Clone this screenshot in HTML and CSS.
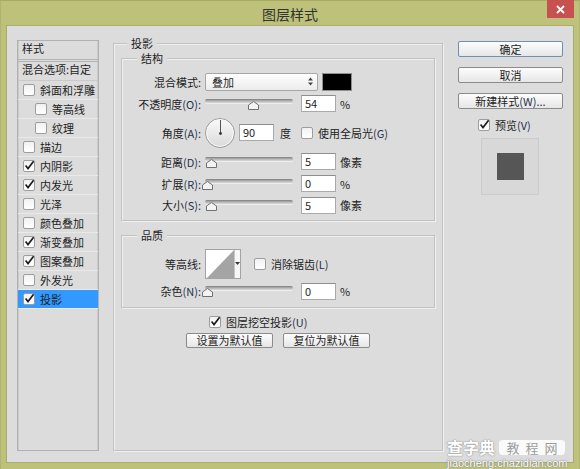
FILE: index.html
```html
<!DOCTYPE html>
<html lang="zh">
<head>
<meta charset="utf-8">
<title>图层样式</title>
<link rel="stylesheet" href="styles.css">
</head>
<body>
<div class="window">
  <div class="titlebar">
    <div class="title">图层样式</div>
    <div class="close"><svg width="9" height="9" viewBox="0 0 9 9"><path d="M1 1 L8 8 M8 1 L1 8" stroke="#fff" stroke-width="1.8" fill="none"/></svg></div>
  </div>
  <div class="body">
    <div class="sidebar">
      <div class="side-head">样式</div>
      <div class="side-blend">混合选项:自定</div>
      <ul class="fx">
        <li class="fx-item"><span class="cb"></span>斜面和浮雕</li>
        <li class="fx-item sub"><span class="cb"></span>等高线</li>
        <li class="fx-item sub"><span class="cb"></span>纹理</li>
        <li class="fx-item"><span class="cb"></span>描边</li>
        <li class="fx-item"><span class="cb on"><svg viewBox="0 0 12 12"><path d="M2.6 5.6 L5 8.6 L10.6 1.2"/></svg></span>内阴影</li>
        <li class="fx-item"><span class="cb on"><svg viewBox="0 0 12 12"><path d="M2.6 5.6 L5 8.6 L10.6 1.2"/></svg></span>内发光</li>
        <li class="fx-item"><span class="cb"></span>光泽</li>
        <li class="fx-item"><span class="cb"></span>颜色叠加</li>
        <li class="fx-item"><span class="cb on"><svg viewBox="0 0 12 12"><path d="M2.6 5.6 L5 8.6 L10.6 1.2"/></svg></span>渐变叠加</li>
        <li class="fx-item"><span class="cb on"><svg viewBox="0 0 12 12"><path d="M2.6 5.6 L5 8.6 L10.6 1.2"/></svg></span>图案叠加</li>
        <li class="fx-item"><span class="cb"></span>外发光</li>
        <li class="fx-item active"><span class="cb on"><svg viewBox="0 0 12 12"><path d="M2.6 5.6 L5 8.6 L10.6 1.2"/></svg></span>投影</li>
      </ul>
    </div>

    <div class="main">
      <div class="group outer">
        <div class="legend">投影</div>
        <div class="group inner">
          <div class="legend lg2">结构</div>
          <div class="rows">
            <div class="row h21">
              <span class="lbl">混合模式:</span>
              <div class="select"><span>叠加</span><svg width="5" height="9" viewBox="0 0 5 9"><path d="M0 3.5 L2.5 0.5 L5 3.5 Z M0 5.5 L2.5 8.5 L5 5.5 Z" fill="#444"/></svg></div>
              <span class="swatch"></span>
            </div>
            <div class="row h23">
              <span class="lbl">不透明度<span class="k">(O):</span></span>
              <div class="slider"><div class="track"></div><svg class="thumb" style="left:43px" width="11" height="9" viewBox="0 0 11 9"><path d="M5.5 0.5 L10.5 4 V8.5 H0.5 V4 Z"/></svg></div>
              <span class="num">54</span><span class="unit">%</span>
            </div>
            <div class="row h35">
              <span class="lbl">角度<span class="k">(A):</span></span>
              <svg class="dial" width="30" height="30" viewBox="0 0 30 30">
                <defs><linearGradient id="dg" x1="0" y1="0" x2="0" y2="1"><stop offset="0" stop-color="#fbfbfb"/><stop offset="1" stop-color="#d9d9d9"/></linearGradient></defs>
                <circle cx="15" cy="15" r="14.5" fill="url(#dg)" stroke="#9b9b9b"/>
                <circle cx="15" cy="15" r="13.3" fill="none" stroke="#f6f6f6"/>
                <line x1="15.5" y1="15" x2="15.5" y2="2" stroke="#555" stroke-width="1"/>
                <circle cx="15.5" cy="15.5" r="1.4" fill="#333"/>
              </svg>
              <span class="num">90</span><span class="unit deg">度</span>
              <span class="cb gap10"></span><span class="cbl">使用全局光<span class="k">(G)</span></span>
            </div>
            <div class="row h23">
              <span class="lbl">距离<span class="k">(D):</span></span>
              <div class="slider"><div class="track"></div><svg class="thumb" style="left:1px" width="11" height="9" viewBox="0 0 11 9"><path d="M5.5 0.5 L10.5 4 V8.5 H0.5 V4 Z"/></svg></div>
              <span class="num">5</span><span class="unit">像素</span>
            </div>
            <div class="row h21">
              <span class="lbl">扩展<span class="k">(R):</span></span>
              <div class="slider"><div class="track"></div><svg class="thumb" style="left:-3px" width="11" height="9" viewBox="0 0 11 9"><path d="M5.5 0.5 L10.5 4 V8.5 H0.5 V4 Z"/></svg></div>
              <span class="num">0</span><span class="unit">%</span>
            </div>
            <div class="row h22">
              <span class="lbl">大小<span class="k">(S):</span></span>
              <div class="slider"><div class="track"></div><svg class="thumb" style="left:1px" width="11" height="9" viewBox="0 0 11 9"><path d="M5.5 0.5 L10.5 4 V8.5 H0.5 V4 Z"/></svg></div>
              <span class="num">5</span><span class="unit">像素</span>
            </div>
          </div>
        </div>

        <div class="group inner quality">
          <div class="legend lg2">品质</div>
          <div class="rows">
            <div class="row h31">
              <span class="lbl">等高线:</span>
              <div class="contour">
                <svg width="28" height="28" viewBox="0 0 28 28"><path d="M1 28 L28 0 V28 Z" fill="#a4a4a4"/></svg>
                <div class="strip"><svg width="5" height="3" viewBox="0 0 5 3"><path d="M0 0 H5 L2.5 3 Z" fill="#333"/></svg></div>
              </div>
              <span class="cb gap13"></span><span class="cbl">消除锯齿<span class="k">(L)</span></span>
            </div>
            <div class="row h24">
              <span class="lbl">杂色<span class="k">(N):</span></span>
              <div class="slider"><div class="track"></div><svg class="thumb" style="left:-3px" width="11" height="9" viewBox="0 0 11 9"><path d="M5.5 0.5 L10.5 4 V8.5 H0.5 V4 Z"/></svg></div>
              <span class="num">0</span><span class="unit">%</span>
            </div>
          </div>
        </div>

        <div class="knock">
          <span class="cb on"><svg viewBox="0 0 12 12"><path d="M2.6 5.6 L5 8.6 L10.6 1.2"/></svg></span><span class="cbl">图层挖空投影<span class="k">(U)</span></span>
        </div>
        <div class="defaults">
          <div class="btn small">设置为默认值</div>
          <div class="btn small">复位为默认值</div>
        </div>
      </div>
    </div>

    <div class="actions">
      <div class="btn primary">确定</div>
      <div class="btn">取消</div>
      <div class="btn">新建样式<span class="k">(W)...</span></div>
      <div class="preview-toggle">
        <span class="cb on"><svg viewBox="0 0 12 12"><path d="M2.6 5.6 L5 8.6 L10.6 1.2"/></svg></span><span class="cbl">预览<span class="k">(V)</span></span>
      </div>
      <div class="preview"><div class="square"></div></div>
    </div>
  </div>
</div>
<div class="watermark">
  <div class="wm-top"><span class="wm-brand">查字典</span><span class="wm-box">教程网</span></div>
  <div class="wm-url">jiaocheng.chazidian.com</div>
</div>
</body>
</html>
```

FILE: styles.css
```css
* { box-sizing: border-box; }
html, body { margin: 0; padding: 0; }
body {
  width: 580px;
  height: 469px;
  overflow: hidden;
  position: relative;
  font-family: "Noto Sans CJK SC", "Noto Sans", sans-serif;
  font-size: 11px;
  color: #1e1e1e;
  background: #bdc17a;
}
ul { margin: 0; padding: 0; list-style: none; }

.window {
  width: 580px;
  height: 469px;
  background: #bdc17a;
  box-shadow: inset 0 1px 0 #a7ab66, inset 1px 0 0 #b0b46e, inset -1px 0 0 #b0b46e;
}
.titlebar {
  height: 26px;
  display: grid;
  grid-template-columns: 1fr auto 1fr;
}
.title {
  grid-column: 2;
  font-size: 14px;
  line-height: 28px;
  color: #333;
}
.close {
  grid-column: 3;
  justify-self: end;
  align-self: start;
  width: 27px;
  height: 18px;
  margin-right: 6px;
  background: #c75050;
  display: flex;
  align-items: center;
  justify-content: center;
}
.close svg { display: block; }

.body {
  margin: 0 7px;
  height: 436px;
  background: #dcdcdc;
  display: flex;
  align-items: flex-start;
  padding: 14px 10px 0 10px;
  box-shadow: 0 0 0 1px #a9ad6a;
}

/* sidebar */
.sidebar {
  width: 82px;
  height: 411px;
  border: 1px solid #b1b1b1;
  box-shadow: inset 1px 0 0 #cacaca, inset -1px 0 0 #cacaca;
  flex: none;
}
.side-head {
  height: 21px;
  padding-left: 4px;
  line-height: 14px;
  padding-top: 0;
  border-bottom: 3px double #b3b3b3;
}
.side-blend {
  height: 19px;
  padding-left: 4px;
  line-height: 14px;
  border-bottom: 1px solid #c9c9c9;
}
.fx-item {
  height: 19px;
  display: flex;
  align-items: center;
  gap: 5px;
  padding-left: 5px;
  border-bottom: 1px solid #e9e9e9;
  line-height: 14px;
}
.fx-item.sub { padding-left: 17px; }
.fx-item.active { background: #3399ff; border-bottom-color: #e9e9e9; }

/* checkbox */
.cb {
  width: 12px;
  height: 12px;
  flex: none;
  display: inline-block;
  border: 1px solid #9d9d9d;
  border-radius: 2px;
  background: linear-gradient(#f1f1f1, #ffffff);
  position: relative;
}
.cb svg {
  display: block;
  width: 12px;
  height: 12px;
  margin: -1px 0 0 -1px;
  overflow: visible;
}
.cb svg path { fill: none; stroke: #1b1b1b; stroke-width: 1.6; }
.cbl { margin-left: 5px; white-space: nowrap; }
.k { color: #25324a; }

/* main */
.main { margin-left: 14px; width: 330px; flex: none; }
.group {
  border: 1px solid #c2c2c2;
  box-shadow: inset 1px 1px 0 #efefef, 1px 1px 0 #efefef;
}
.outer { margin-top: 3px; height: 408px; }
.legend {
  width: fit-content;
  line-height: 14px;
  height: 14px;
  margin: -8px 0 0 13px;
  padding: 0 4px;
  background: #dcdcdc;
  position: relative;
}
.legend.lg2 { margin-left: 15px; }
.inner { margin: 8px 7px 0 7px; padding-bottom: 4px; }
.inner.quality { margin-top: 14px; }
.rows { margin-top: 6px; }
.row { display: flex; align-items: center; white-space: nowrap; }
.h21 { height: 21px; }
.h22 { height: 22px; }
.h23 { height: 23px; }
.h24 { height: 24px; }
.h31 { height: 31px; }
.h35 { height: 35px; }
.lbl {
  width: 79px;
  margin-right: 4px;
  text-align: right;
  flex: none;
}

.select {
  width: 113px;
  height: 18px;
  border: 1px solid #a6a6a6;
  border-radius: 2px;
  background: linear-gradient(#fefefe, #ececec);
  display: flex;
  align-items: center;
  justify-content: space-between;
  padding: 0 4px 0 6px;
}
.select svg { display: block; }
.swatch {
  width: 30px;
  height: 18px;
  margin-left: 4px;
  background: #000;
  border: 1px solid #8f8f8f;
}

.slider {
  width: 88px;
  height: 11px;
  margin-right: 8px;
  margin-top: 1px;
  position: relative;
  flex: none;
}
.track {
  height: 4px;
  border-radius: 2px;
  background: linear-gradient(#7c7c7c, #b4b4b4 50%, #dadada);
  box-shadow: 0 1px 0 #efefef;
}
.thumb { position: absolute; top: 2px; display: block; }
.thumb path { fill: #f3f3f3; stroke: #707070; stroke-width: 1; }

.num {
  width: 35px;
  height: 17px;
  background: #fff;
  border: 1px solid #aaaaaa;
  border-top-color: #8e8e8e;
  padding-left: 3px;
  line-height: 15px;
  font-size: 11px;
  flex: none;
}
.unit { margin-left: 4px; }
.unit.deg { margin-left: 6px; }
.dial { display: block; margin-right: 4px; flex: none; }
.gap10 { margin-left: 10px; }
.gap13 { margin-left: 13px; }

.contour {
  width: 36px;
  height: 30px;
  border: 1px solid #a3a3a3;
  background: #fff;
  display: flex;
  flex: none;
}
.contour svg { display: block; }
.strip {
  width: 6px;
  border-left: 1px solid #c6c6c6;
  background: #f7f7f7;
  display: flex;
  align-items: center;
  justify-content: center;
}

.knock {
  margin-top: 5px;
  height: 17px;
  padding-left: 95px;
  display: flex;
  align-items: center;
}
.defaults {
  margin-top: 3px;
  padding-left: 72px;
  display: flex;
  gap: 10px;
}

.btn {
  height: 16px;
  border: 1px solid #8b8b8b;
  border-radius: 2px;
  background: linear-gradient(#fdfdfd, #e6e6e6);
  text-align: center;
  line-height: 14px;
  white-space: nowrap;
}
.btn.small { width: 87px; height: 15px; line-height: 13px; }
.btn.primary { border-color: #6f8fb6; }

.actions {
  margin-left: 15px;
  width: 105px;
  flex: none;
  margin-top: 1px;
  display: flex;
  flex-direction: column;
  gap: 10px;
}
.preview-toggle {
  margin-top: -3px;
  height: 17px;
  padding-left: 20px;
  display: flex;
  align-items: center;
}
.preview {
  margin: -5px 0 0 23px;
  width: 58px;
  height: 57px;
  border: 1px solid #cbcbcb;
  background: #d8d8d8;
  display: flex;
  align-items: center;
  justify-content: center;
}
.square { width: 27px; height: 27px; background: #565656; }

/* watermark overlay */
.watermark {
  position: absolute;
  left: 447px;
  top: 438px;
  width: 124px;
}
.wm-top { display: flex; align-items: center; gap: 4px; height: 18px; }
.wm-brand {
  font-size: 16px;
  font-weight: bold;
  color: #fff;
  line-height: 18px;
  text-shadow: 0 0 1px #8c8c8c, 0 0 2px #9a9a9a;
}
.wm-box {
  width: 66px;
  height: 15px;
  border-radius: 4px;
  background: rgba(255, 255, 255, 0.85);
  color: #9c9c9c;
  font-size: 13px;
  line-height: 15px;
  letter-spacing: 6px;
  text-align: center;
  padding-left: 6px;
}
.wm-url {
  font-family: "Liberation Sans", Arial, sans-serif;
  font-size: 11px;
  line-height: 12px;
  color: #fff;
  margin-top: 1px;
  text-shadow: 0 0 1px #7a7a7a, 0 0 2px #8a8a8a;
}
```
